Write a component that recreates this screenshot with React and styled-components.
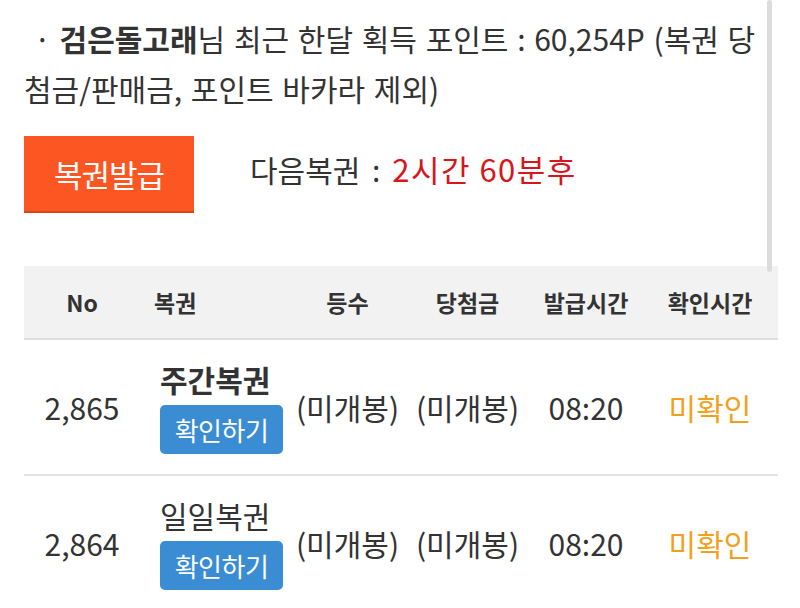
import styled, { createGlobalStyle } from 'styled-components';

const GlobalStyle = createGlobalStyle`
  html, body {
    margin: 0;
    padding: 0;
    background: #fff;
  }
  body {
    font-family: "Noto Sans CJK KR", "Noto Sans", sans-serif;
    color: #333;
  }
`

const Page = styled.div`
  position: relative;
  width: 800px;
  height: 608px;
  overflow: hidden;
  padding: 13px 22px 0 24px;
  box-sizing: border-box;
`

const Scroll = styled.div`
  position: absolute;
  top: 0;
  right: 28px;
  width: 5px;
  height: 272px;
  border-radius: 3px;
  background: #dcdcdd;
`

const Info = styled.p`
  margin: 0;
  width: 741px;
  font-size: 30px;
  line-height: 50px;
  word-spacing: 2px;
  word-break: break-all;
  text-indent: 10px;
  color: #333;
`

const Nick = styled.b`
  font-weight: 700;
`

const IssueRow = styled.div`
  display: flex;
  align-items: center;
  margin-top: 23px;
  gap: 56px;
`

const IssueButton = styled.button`
  width: 170px;
  height: 77px;
  border: none;
  border-bottom: 2px solid #d8461a;
  background: #fc5622;
  color: #fff;
  font-family: inherit;
  font-size: 31px;
  letter-spacing: -1px;
  padding: 0;
`

const Next = styled.div`
  font-size: 30px;
  word-spacing: 5px;
  margin-top: -12px;
  color: #333;
`

const Red = styled.span`
  color: #d8151c;
  font-size: 31px;
  letter-spacing: 1.5px;
  word-spacing: 0;
`

const Table = styled.div`
  margin-top: 53px;
  width: 754px;
`

const Grid = styled.div`
  display: grid;
  grid-template-columns: 116px 150px 115px 125px 112px 136px;
  align-items: center;
`

const Head = styled(Grid)`
  height: 72px;
  background: #f2f2f2;
  border-bottom: 2px solid #dddddd;
`

const Th = styled.div`
  font-size: 23px;
  font-weight: 700;
  color: #333;
  text-align: ${p => (p.$left ? 'left' : 'center')};
  padding-left: ${p => (p.$left ? '14px' : '0')};
`

const Row = styled(Grid)`
  height: 134px;
  border-bottom: 2px solid #e3e3e3;
`

const Td = styled.div`
  font-size: 30px;
  color: ${p => p.$color || '#333'};
  text-align: center;
`

const Lotto = styled.div`
  display: flex;
  flex-direction: column;
  align-items: flex-start;
  padding-left: 20px;
  gap: 8px;
`

const LottoName = styled.div`
  font-size: 30px;
  line-height: 36px;
  font-weight: ${p => (p.$bold ? 700 : 400)};
  color: #333;
`

const CheckButton = styled.button`
  width: 123px;
  height: 49px;
  border: none;
  border-radius: 5px;
  background: #3b8dd3;
  color: #fff;
  font-family: inherit;
  font-size: 26px;
  letter-spacing: -0.5px;
  padding: 0;
`

const rows = [
  { no: '2,865', name: '주간복권', bold: true },
  { no: '2,864', name: '일일복권', bold: false },
]

export default function App() {
  return (
    <>
      <GlobalStyle />
      <Page>
        <Scroll />
        <Info>
          · <Nick>검은돌고래</Nick>님 최근 한달 획득 포인트 : 60,254P (복권 당첨금/판매금, 포인트 바카라 제외)
        </Info>
        <IssueRow>
          <IssueButton>복권발급</IssueButton>
          <Next>
            다음복권 : <Red>2시간 60분후</Red>
          </Next>
        </IssueRow>
        <Table>
          <Head>
            <Th>No</Th>
            <Th $left>복권</Th>
            <Th>등수</Th>
            <Th>당첨금</Th>
            <Th>발급시간</Th>
            <Th>확인시간</Th>
          </Head>
          {rows.map(r => (
            <Row key={r.no}>
              <Td>{r.no}</Td>
              <Lotto>
                <LottoName $bold={r.bold}>{r.name}</LottoName>
                <CheckButton>확인하기</CheckButton>
              </Lotto>
              <Td>(미개봉)</Td>
              <Td>(미개봉)</Td>
              <Td>08:20</Td>
              <Td $color="#f0a21e">미확인</Td>
            </Row>
          ))}
        </Table>
      </Page>
    </>
  )
}
